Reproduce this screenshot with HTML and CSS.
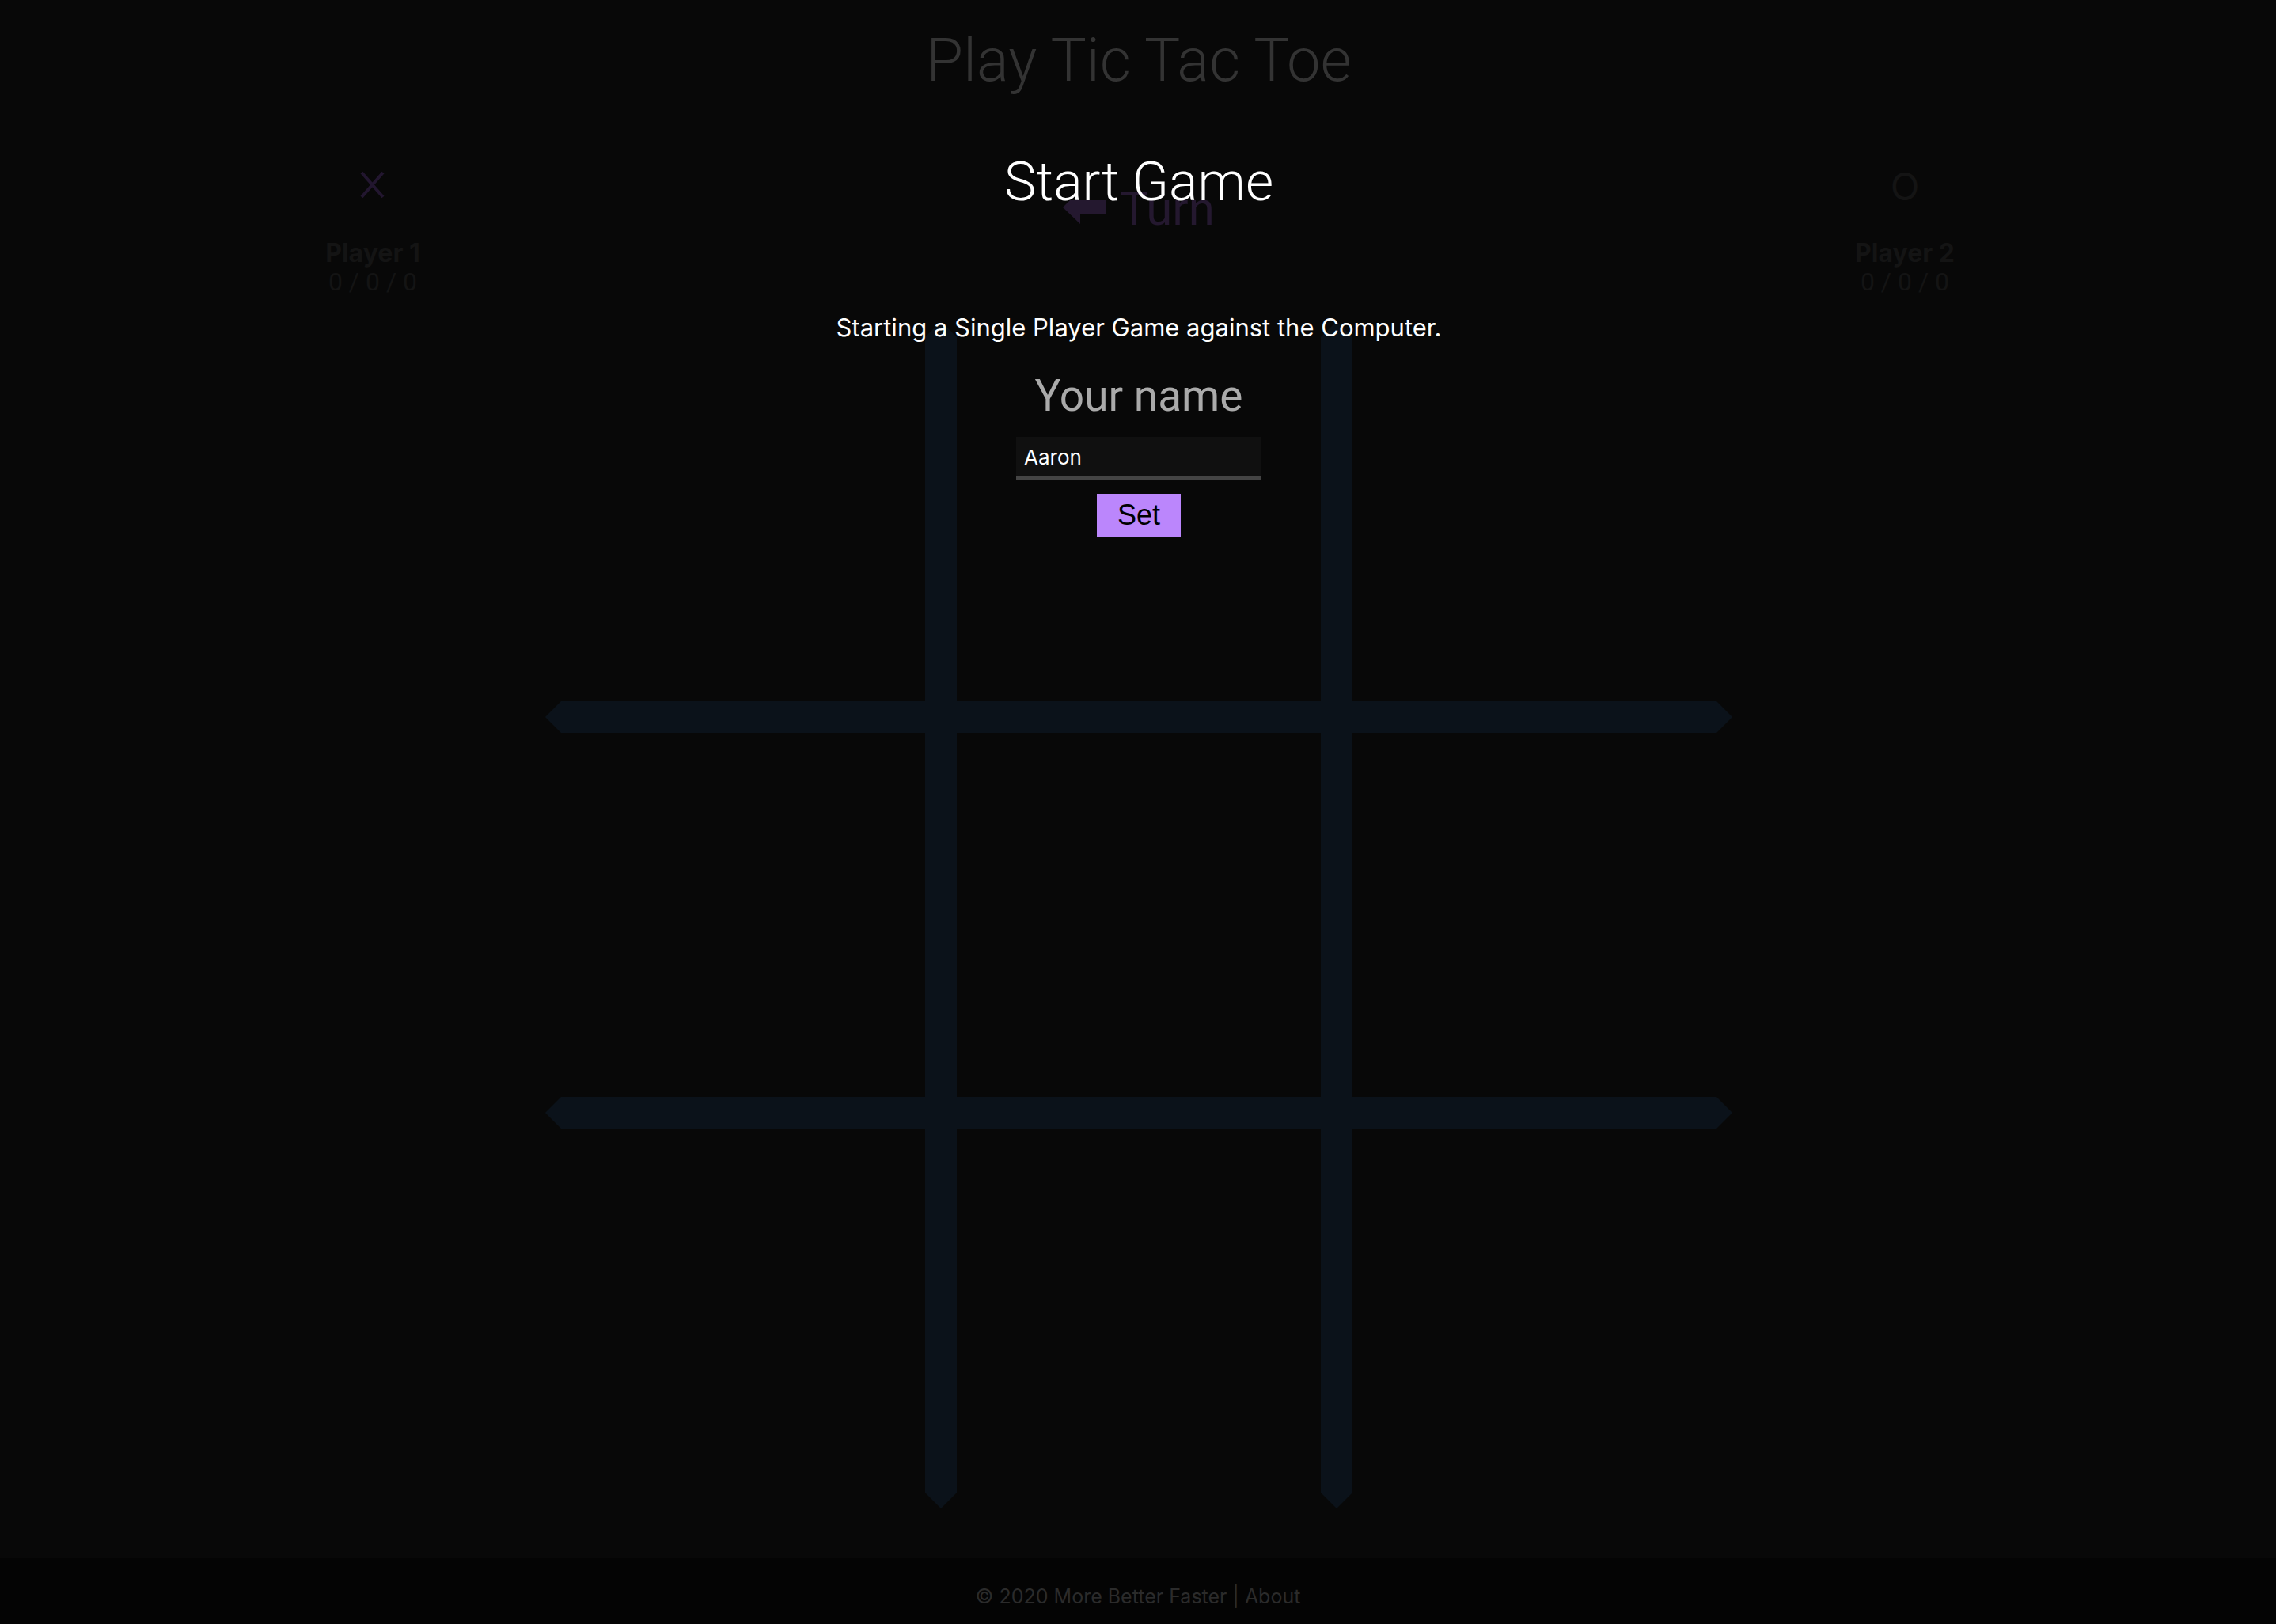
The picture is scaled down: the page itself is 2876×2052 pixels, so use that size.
FILE: index.html
```html
<!DOCTYPE html>
<html lang="en">
<head>
<meta charset="utf-8">
<title>Play Tic Tac Toe</title>
<link rel="stylesheet" href="styles.css">
</head>
<body>
<header class="header"><h1 class="title">Play Tic Tac Toe</h1></header>
<main class="game">
  <section class="players">
    <div class="player">
      <svg class="mark mark-x" viewBox="0 0 48 56" aria-label="X"><path d="M10 12 37 43M37 12 10 43"/></svg>
      <strong class="name">Player 1</strong>
      <span class="score">0 / 0 / 0</span>
    </div>
    <div class="turn">
      <svg class="arrow" viewBox="0 0 54 44" aria-hidden="true"><path d="M0 22 9 13H54V30H22V43Z"/></svg>
      <span>Turn</span>
    </div>
    <div class="player">
      <span class="mark">O</span>
      <strong class="name">Player 2</strong>
      <span class="score">0 / 0 / 0</span>
    </div>
  </section>
  <div class="board">
    <i class="bar col-1"></i><i class="bar col-2"></i>
    <i class="bar row-1"></i><i class="bar row-2"></i>
  </div>
</main>
<footer class="footer">© 2020 More Better Faster | <a href="#about">About</a></footer>
<div class="modal" role="dialog" aria-labelledby="start">
  <h2 class="modal-title" id="start">Start Game</h2>
  <p class="intro">Starting a Single Player Game against the Computer.</p>
  <form class="form">
    <label class="label" for="player-name">Your name</label>
    <input class="input" id="player-name" type="text" value="Aaron">
    <button class="button" type="button">Set</button>
  </form>
</div>
</body>
</html>
```
FILE: styles.css
```css
* { box-sizing: border-box; }
body {
  margin: 0;
  min-height: 100vh;
  display: flex;
  flex-direction: column;
  background: #080808;
  color: #141414;
  font: 32px/36px Inter, "Liberation Sans", sans-serif;
}
h1, h2, p { margin: 0; }
.header, .game, .modal { padding-left: 2px; }
.header { padding-top: 28px; text-align: center; }
.title { font: 300 76px/96px Roboto, sans-serif; color: #333; }
.game { flex: 1; }
.players {
  display: grid;
  grid-template-columns: 938px 1fr 938px;
  height: 282px;
}
.player { display: flex; flex-direction: column; align-items: center; padding-top: 82px; }
.mark { height: 56px; font-size: 48px; line-height: 60px; margin-bottom: 40px; }
.mark-x { width: 48px; fill: none; stroke: #22162f; stroke-width: 4; }
.score { font-family: Roboto, sans-serif; }
.turn {
  display: flex;
  justify-content: center;
  gap: 18px;
  padding-top: 100px;
  color: #24182f;
  font: 60px/80px Roboto, sans-serif;
}
.arrow { width: 54px; height: 44px; margin-top: 16px; fill: #24182f; }
.board {
  display: grid;
  grid-template-columns: 480px 40px 460px 40px 480px;
  grid-template-rows: 480px 40px 460px 40px 480px;
  width: 1500px;
  margin: 0 auto;
}
.bar { background: #0b121a; }
.col-1, .col-2 { grid-row: 1 / -1; clip-path: polygon(50% 0, 100% 20px, 100% calc(100% - 20px), 50% 100%, 0 calc(100% - 20px), 0 20px); }
.row-1, .row-2 { grid-column: 1 / -1; clip-path: polygon(0 50%, 20px 0, calc(100% - 20px) 0, 100% 50%, calc(100% - 20px) 100%, 20px 100%); }
.col-1 { grid-column: 2; }
.col-2 { grid-column: 4; }
.row-1 { grid-row: 2; }
.row-2 { grid-row: 4; }
.footer {
  padding: 30px 0 17px;
  background: #040404;
  color: #2b2b2b;
  font-size: 25px;
  text-align: center;
}
.footer a { color: inherit; text-decoration: none; }
.modal {
  position: absolute;
  inset: 0;
  display: flex;
  flex-direction: column;
  align-items: center;
  padding-top: 186px;
  color: #fff;
}
.modal-title { font: 300 68px/88px Roboto, sans-serif; }
.intro { margin-top: 120px; font-size: 31px; line-height: 40px; }
.form { display: flex; flex-direction: column; align-items: center; }
.label { margin-top: 34px; font: 55px/64px Roboto, sans-serif; color: #aaa; }
.input {
  width: 310px;
  height: 54px;
  margin-top: 20px;
  padding: 0 10px;
  border: 0;
  border-bottom: 4px solid #444;
  background: #101010;
  color: #fff;
  font: 26px Inter, "Liberation Sans", sans-serif;
}
.button {
  width: 106px;
  height: 54px;
  margin-top: 18px;
  padding: 0;
  border: 0;
  background: #bb86fc;
  color: #000;
  font: 36px "Liberation Sans", sans-serif;
}
```
